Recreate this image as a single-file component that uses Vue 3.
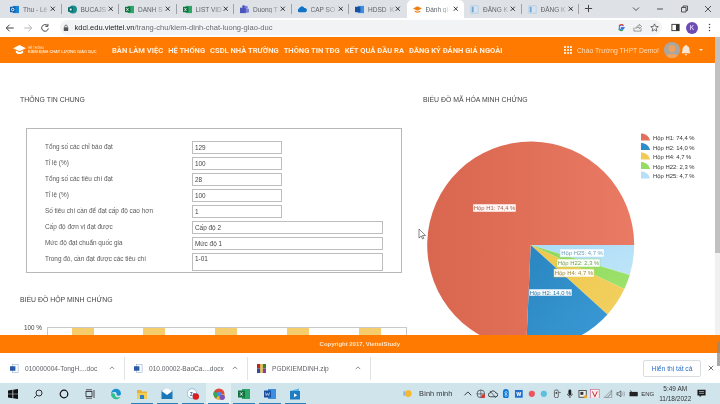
<script setup>
const tabs = [
  { t: 'Thu - Lê', i: 'outlook' }, { t: 'BUCAJS', i: 'sway' }, { t: 'DANH S', i: 'excel' },
  { t: 'LIST VID', i: 'excel' }, { t: 'Duong T', i: 'teams' }, { t: 'CAP SO', i: 'cloud' },
  { t: 'HDSD_K', i: 'word' }, { t: 'Đánh gi', i: 'cap', active: true },
  { t: 'ĐĂNG K', i: 'doc' }, { t: 'ĐĂNG K', i: 'doc' }
]
const nav = ['BÀN LÀM VIỆC', 'HỆ THỐNG', 'CSDL NHÀ TRƯỜNG', 'THÔNG TIN TĐG', 'KẾT QUẢ ĐẦU RA', 'ĐĂNG KÝ ĐÁNH GIÁ NGOÀI']
const fields = [
  { l: 'Tổng số các chỉ báo đạt', v: '129' }, { l: 'Tỉ lệ (%)', v: '100' },
  { l: 'Tổng số các tiêu chí đạt', v: '28' }, { l: 'Tỉ lệ (%)', v: '100' },
  { l: 'Số tiêu chí cần để đạt cấp độ cao hơn', v: '1' },
  { l: 'Cấp độ đơn vị đạt được', v: 'Cấp độ 2', wide: true },
  { l: 'Mức độ đạt chuẩn quốc gia', v: 'Mức độ 1', wide: true },
  { l: 'Trong đó, cần đạt được các tiêu chí', v: '1-01', area: true }
]
const cx = 530.7, cy = 245, r = 103.5
const pt = (d) => {
  const a = (d * Math.PI) / 180
  return `${(cx + r * Math.cos(a)).toFixed(2)} ${(cy + r * Math.sin(a)).toFixed(2)}`
}
const raw = [
  { n: 'Hộp H25: 4,7 %', p: 4.7, c: 'url(#gBlueL)', s: '#b5e0f7', tc: '#6f9fbb', box: [560, 249, 44, 8] },
  { n: 'Hộp H22: 2,3 %', p: 2.3, c: 'url(#gGreen)', s: '#94dc62', tc: '#76a056', box: [557, 259, 43, 8] },
  { n: 'Hộp H4: 4,7 %', p: 4.7, c: 'url(#gYellow)', s: '#efcb52', tc: '#a08a3a', box: [554, 269, 40, 8] },
  { n: 'Hộp H2: 14,0 %', p: 14, c: 'url(#gBlue)', s: '#2f8ec9', tc: '#2f7aa8', box: [529, 289, 43, 7] },
  { n: 'Hộp H1: 74,4 %', p: 74.3, c: 'url(#gRed)', s: '#e2705a', tc: '#a8604f', box: [473, 204, 43, 8] }
]
let acc = 0
const slices = raw.map((s) => {
  const a0 = acc
  acc += s.p * 3.6
  const large = s.p > 50 ? 1 : 0
  return { ...s, d: `M${cx} ${cy} L${pt(a0)} A${r} ${r} 0 ${large} 1 ${pt(acc)} Z` }
})
const legend = [
  { n: 'Hộp H1: 74,4 %', c: '#e2705a' }, { n: 'Hộp H2: 14,0 %', c: '#2f8ec9' },
  { n: 'Hộp H4: 4,7 %', c: '#efcb52' }, { n: 'Hộp H22: 2,3 %', c: '#94dc62' },
  { n: 'Hộp H25: 4,7 %', c: '#b5e0f7' }
]
const bars = [72, 143, 215, 287, 359]
const downloads = [
  { n: '010000004-TongH....doc', w: 124, k: 'w' },
  { n: '010.00002-BaoCa....docx', w: 123, k: 'w' },
  { n: 'PGDKIEMDINH.zip', w: 123, k: 'z' }
]
const grid = [0, 1, 2, 3, 4, 5, 6, 7, 8]
</script>

<template>
  <div class="screen">
    <div class="tabstrip">
      <div v-for="(tab, i) in tabs" :key="i" class="tab" :class="{ active: tab.active }">
        <svg class="tabicon" viewBox="0 0 10 10">
          <template v-if="tab.i === 'outlook'">
            <rect x="3" y="1" width="7" height="8" fill="#1a84d8" /><rect x="0" y="2" width="6" height="6" fill="#0f5ea8" /><circle cx="3" cy="5" r="1.4" fill="none" stroke="#fff" />
          </template>
          <template v-else-if="tab.i === 'sway'">
            <circle cx="5.5" cy="5" r="4.5" fill="#1c8d8d" /><rect x="0" y="2.5" width="5.5" height="5" fill="#0b6a6a" /><rect x="2" y="4" width="2" height="2" fill="#fff" />
          </template>
          <template v-else-if="tab.i === 'excel'">
            <rect x="3" y="1" width="7" height="8" fill="#2da768" /><rect x="0" y="2" width="6" height="6" fill="#107040" /><path d="M1.5 3.4l2.4 3.2M3.9 3.4L1.5 6.6" stroke="#fff" stroke-width=".8" />
          </template>
          <template v-else-if="tab.i === 'teams'">
            <circle cx="7" cy="2.5" r="1.6" fill="#7b83d8" /><rect x="5" y="4" width="5" height="4.5" rx="1" fill="#7b83d8" /><circle cx="4" cy="2" r="1.6" fill="#4b53bc" /><rect x="0" y="3" width="6.5" height="6" fill="#4b53bc" />
          </template>
          <template v-else-if="tab.i === 'cloud'">
            <path d="M1.5 8a2 2 0 0 1-.2-4A3 3 0 0 1 7 3.3 2.4 2.4 0 0 1 8 8z" fill="#0f74c8" />
          </template>
          <template v-else-if="tab.i === 'word'">
            <rect x="3" y="1" width="7" height="8" fill="#3d8de0" /><rect x="0" y="2" width="6" height="6" fill="#17509e" />
          </template>
          <template v-else-if="tab.i === 'cap'">
            <path d="M0 4l5-2.600L10 4 5 6.500z" fill="#f08012" /><path d="M2 6v1.500C3.500 9 6.500 9 8 7.500V6L5 7.500z" fill="#f08012" />
          </template>
          <template v-else>
            <rect x="1" y="1" width="8" height="8" fill="#d6e4f2" stroke="#9cc0de" stroke-width=".6" /><rect x="2" y="2" width="2" height="6" fill="#6fa4d4" />
          </template>
        </svg>
        <span class="tabtext">{{ tab.t }}</span>
        <svg class="tabx" viewBox="0 0 8 8"><path d="M1 1l6 6M7 1L1 7" stroke="#222" stroke-width="1.300" /></svg>
      </div>
      <svg class="plus" viewBox="0 0 10 10"><path d="M5 1v8M1 5h8" stroke="#444" stroke-width="1.100" /></svg>
      <div class="winctl">
        <svg viewBox="0 0 10 10"><path d="M2 3.500l3 3 3-3" fill="none" stroke="#444" stroke-width=".9" /></svg>
        <svg viewBox="0 0 10 10"><path d="M2 5h6" stroke="#444" stroke-width=".9" /></svg>
        <svg viewBox="0 0 10 10"><path d="M2.500 3.500h4.500v4.500h-4.500zM4 3.500V2h4.500v4.500H7" fill="none" stroke="#444" stroke-width=".9" /></svg>
        <svg viewBox="0 0 10 10"><path d="M2 2l6 6M8 2l-6 6" stroke="#444" stroke-width=".9" /></svg>
      </div>
    </div>

    <div class="addressbar">
      <svg class="navicon" viewBox="0 0 12 12"><path d="M10.500 6h-9M5.500 2L1.500 6l4 4" fill="none" stroke="#444" stroke-width="1.200" /></svg>
      <svg class="navicon" viewBox="0 0 12 12"><path d="M1.500 6h9M6.500 2l4 4-4 4" fill="none" stroke="#b4b6b9" stroke-width="1.200" /></svg>
      <svg class="navicon" viewBox="0 0 12 12"><path d="M10 6.500A4 4 0 1 1 8.800 3M9.500 1v3h-3" fill="none" stroke="#444" stroke-width="1.200" /></svg>
      <div class="omnibox">
        <svg class="lock" viewBox="0 0 8 10"><rect x="1" y="4" width="6" height="5" rx=".6" fill="#555" /><path d="M2.300 4V2.800a1.700 1.700 0 0 1 3.400 0V4" fill="none" stroke="#555" /></svg>
        <span class="url"><b>kdcl.edu.viettel.vn</b>/trang-chu/kiem-dinh-chat-luong-giao-duc</span>
        <div class="omniright">
          <svg viewBox="0 0 10 10"><path d="M8.600 5H5v1.200h2.300A2.600 2.600 0 1 1 7 3.100" fill="none" stroke="#3b78e7" stroke-width="1.200" /><path d="M2.200 3.200A3.400 3.400 0 0 1 7.300 2.800" fill="none" stroke="#e0483a" stroke-width="1.200" /><path d="M1.800 6.500A3.400 3.400 0 0 0 6.500 8" fill="none" stroke="#36a853" stroke-width="1.200" /></svg>
          <svg viewBox="0 0 10 10"><path d="M1 5v4h8V6M3 6c.4-2 2-3 4-3V1.500L9.500 4 7 6.400V5C5 5 4 5.200 3 6z" fill="none" stroke="#666" stroke-width=".7" /></svg>
          <svg viewBox="0 0 10 10"><path d="M5 1l1.200 2.800 3 .2-2.300 2 .7 3L5 7.500 2.400 9l.7-3L.8 4l3-.2z" fill="none" stroke="#444" stroke-width=".8" /></svg>
        </div>
      </div>
      <svg class="panel" viewBox="0 0 10 10"><rect x="1" y="1.500" width="8" height="7" fill="none" stroke="#333" stroke-width="1" /><rect x="5.500" y="1.500" width="3.500" height="7" fill="#333" /></svg>
      <span class="profile">K</span>
      <svg class="dots" viewBox="0 0 4 12"><circle cx="2" cy="2" r="1" fill="#444" /><circle cx="2" cy="6" r="1" fill="#444" /><circle cx="2" cy="10" r="1" fill="#444" /></svg>
    </div>

    <div class="viewport">
      <div class="page">
        <header class="topnav">
          <div class="logo">
            <svg viewBox="0 0 14 11"><path d="M0 3.500L7 0l7 3.500L7 7z" fill="#fff" /><path d="M3 6v2.500c2 2 6 2 8 0V6L7 8z" fill="#fff" /></svg>
            <div class="logotext"><small>HỆ THỐNG</small><span>KIỂM ĐỊNH CHẤT LƯỢNG GIÁO DỤC</span></div>
          </div>
          <nav class="menu"><a v-for="n in nav" :key="n">{{ n }}</a></nav>
          <div class="userarea">
            <div class="apps"><i v-for="g in grid" :key="g"></i></div>
            <span class="hello">Chào Trường THPT Demo!</span>
            <svg class="avatar" viewBox="0 0 16 16"><circle cx="8" cy="8" r="8" fill="#a9a7a3" /><circle cx="8" cy="6.500" r="3.500" fill="#f0a35e" /><path d="M2.500 14c1-3 10-3 11 0l-3 2h-5z" fill="#f0a35e" /></svg>
            <svg class="bell" viewBox="0 0 10 11"><path d="M5 0c.6 0 1 .4 1 1 2 .5 2.500 2 2.500 4 0 1.500.5 2.500 1.200 3.300H.3C1 7.500 1.500 6.500 1.500 5c0-2 .5-3.500 2.500-4 0-.6.4-1 1-1zM3.800 9.200h2.400A1.200 1.200 0 0 1 3.800 9.200z" fill="#f6e7d8" /></svg>
            <span class="caret"></span>
          </div>
        </header>

        <main class="content">
          <section class="left">
            <h2>THÔNG TIN CHUNG</h2>
            <div class="formbox">
              <div v-for="(f, i) in fields" :key="i" class="frow">
                <label>{{ f.l }}</label>
                <textarea v-if="f.area" class="wide area" readonly :value="f.v"></textarea>
                <input v-else :class="{ wide: f.wide }" readonly :value="f.v" />
              </div>
            </div>
            <h2 class="second">BIỂU ĐỒ HỘP MINH CHỨNG</h2>
            <div class="barchart">
              <span class="ytick">100 %</span>
              <div class="plot">
                <i v-for="b in bars" :key="b" class="bar" :style="{ left: b - 48 + 'px' }"></i>
              </div>
            </div>
          </section>
          <section class="right">
            <h2>BIỂU ĐỒ MÃ HÓA MINH CHỨNG</h2>
            <svg class="pie" viewBox="423 125 292 210" width="292" height="210">
              <defs>
                <linearGradient id="gRed" x1="0" y1="0" x2="1" y2="0"><stop offset="0" stop-color="#d9664f" /><stop offset="1" stop-color="#e97a63" /></linearGradient>
                <linearGradient id="gBlue" x1="0" y1="0" x2="1" y2="1"><stop offset="0" stop-color="#2a85c0" /><stop offset="1" stop-color="#3b9bd6" /></linearGradient>
                <linearGradient id="gYellow" x1="0" y1="0" x2="1" y2="1"><stop offset="0" stop-color="#eec84c" /><stop offset="1" stop-color="#f2d060" /></linearGradient>
                <linearGradient id="gGreen" x1="0" y1="0" x2="1" y2="1"><stop offset="0" stop-color="#8fd85c" /><stop offset="1" stop-color="#9ce26c" /></linearGradient>
                <linearGradient id="gBlueL" x1="0" y1="0" x2="1" y2="1"><stop offset="0" stop-color="#abdcf6" /><stop offset="1" stop-color="#bfe5f9" /></linearGradient>
              </defs>
              <path v-for="s in slices" :key="s.n" :d="s.d" :fill="s.c" />
              <g v-for="s in slices" :key="'l' + s.n">
                <rect :x="s.box[0]" :y="s.box[1]" :width="s.box[2]" :height="s.box[3]" fill="#fff" fill-opacity=".95" :stroke="s.s" stroke-width=".5" />
                <text :x="s.box[0] + s.box[2] / 2" :y="s.box[1] + 6" text-anchor="middle" class="slabel" :fill="s.tc">{{ s.n }}</text>
              </g>
              <g v-for="(l, i) in legend" :key="l.n">
                <path :d="`M641 ${133.500 + i * 9.500}c4 0 8 2.500 9 7h-9z`" :fill="l.c" />
                <text x="653" :y="140.300 + i * 9.500" class="llabel">{{ l.n }}</text>
              </g>
            </svg>
          </section>
          <svg class="cursor" viewBox="0 0 8 12"><path d="M1 1v9l2.200-2 1.300 3 1.300-.6-1.300-2.900h3z" fill="#fff" stroke="#555" stroke-width=".7" /></svg>
        </main>
      </div>
      <div class="scrolltrack"><div class="scrollthumb"></div></div>
    </div>

    <footer class="copyright">Copyright 2017, ViettelStudy</footer>

    <div class="shelf">
      <div v-for="d in downloads" :key="d.n" class="dl" :style="{ width: d.w + 'px' }">
        <svg class="dlicon" viewBox="0 0 10 10">
          <template v-if="d.k === 'w'"><rect x="3" y=".5" width="6" height="9" fill="#fff" stroke="#8aa6d2" stroke-width=".6" /><rect x="0" y="2.500" width="6" height="5" fill="#2a5aa8" /></template>
          <template v-else><rect x="0" y="0" width="5" height="5" fill="#b3282d" /><rect x="5" y="0" width="5" height="5" fill="#3e7d3a" /><rect x="0" y="5" width="5" height="5" fill="#314c9c" /><rect x="5" y="5" width="5" height="5" fill="#8a3f98" /><rect x="3.500" y="0" width="3" height="10" fill="#e6c65a" /></template>
        </svg>
        <span class="dlname">{{ d.n }}</span>
        <svg class="dlchev" viewBox="0 0 8 5"><path d="M1 4l3-3 3 3" fill="none" stroke="#555" stroke-width=".9" /></svg>
      </div>
      <button class="showall">Hiển thị tất cả</button>
      <svg class="shelfx" viewBox="0 0 8 8"><path d="M1 1l6 6M7 1L1 7" stroke="#444" stroke-width="1" /></svg>
    </div>

    <div class="taskbar">
      <div class="tasks">
        <div class="ti"><svg viewBox="0 0 10 10"><path d="M0 1.500l4.500-.7v3.900H0zM5.200.7L10 0v4.700H5.200zM0 5.300h4.500v3.900L0 8.500zM5.200 5.300H10V10l-4.800-.7z" fill="#111" /></svg></div>
        <div class="ti"><svg viewBox="0 0 10 10"><circle cx="6" cy="4" r="3" fill="none" stroke="#222" stroke-width=".9" /><path d="M3.800 6.200L1 9" stroke="#222" stroke-width=".9" /></svg></div>
        <div class="ti"><svg viewBox="0 0 10 10"><circle cx="5" cy="5" r="3.800" fill="none" stroke="#111" stroke-width="1.200" /></svg></div>
        <div class="ti"><svg viewBox="0 0 10 10"><rect x="1" y="2.500" width="6" height="5" fill="none" stroke="#222" stroke-width=".8" /><path d="M1 .8h6M1 9.200h6M9 1v8" stroke="#222" stroke-width=".8" /></svg></div>
        <div class="ti wide-gap"><svg viewBox="0 0 12 12"><path d="M1 6a5 5 0 0 1 10-.5c0 2-2 2.500-3.500 2-1-.4-1.200-1.500-.8-2C6 3.500 2.500 3.500 1 6z" fill="#1a8fcf" /><path d="M1 6c0 4 4 6 7 5 1.500-.5 2-1.200 2.500-2C8 10 4.500 9.500 5 6.500 4 4.500 1.500 5 1 6z" fill="#2fbf8f" /></svg></div>
        <div class="ti run"><svg viewBox="0 0 12 12"><path d="M1 2h4l1 1.500h5V6H1z" fill="#e8b23a" /><rect x="1" y="5" width="10" height="6" fill="#f4cd55" /><rect x="4" y="7" width="4" height="4" fill="#2a82c8" /></svg></div>
        <div class="ti run"><svg viewBox="0 0 12 12"><rect x="0.500" y="2.500" width="11" height="8.500" fill="#1a78b8" /><path d="M.5 3L6 .5 11.500 3 6 7z" fill="#fff" /></svg></div>
        <div class="ti run"><svg viewBox="0 0 12 12"><circle cx="5" cy="5.500" r="4.800" fill="#fff" stroke="#6aa6d8" stroke-width=".7" /><text x="3" y="7.500" class="tiny" fill="#2a6ab0">Zo</text><circle cx="8.800" cy="8.500" r="3.200" fill="#d92020" /></svg></div>
        <div class="ti run on"><svg viewBox="0 0 12 12"><circle cx="6" cy="6" r="5.500" fill="#e0483a" /><path d="M6 6L11.500 6A5.500 5.500 0 0 1 3 10.600z" fill="#f2c230" /><path d="M6 6L3 10.600A5.500 5.500 0 0 1 1.200 3.200z" fill="#36a853" /><circle cx="6" cy="6" r="2.300" fill="#4a8bf0" /><circle cx="9.200" cy="9.200" r="2.700" fill="#7b52b5" /></svg></div>
        <div class="ti run"><svg viewBox="0 0 12 12"><rect x="4" y="1" width="8" height="10" fill="#2da768" /><rect x="0" y="2.500" width="7" height="7" fill="#107040" /><path d="M2 4.300l2.800 3.400M4.800 4.300L2 7.700" stroke="#fff" stroke-width=".8" /></svg></div>
        <div class="ti run"><svg viewBox="0 0 12 12"><rect x="4" y="1" width="8" height="10" fill="#3d8de0" /><rect x="0" y="2.500" width="7" height="7" fill="#17509e" /><path d="M1.500 4.500l.8 3 1.200-2 1.200 2 .8-3" fill="none" stroke="#fff" stroke-width=".6" /></svg></div>
        <div class="ti run"><svg viewBox="0 0 12 12"><path d="M1 3l9-2.500V3z" fill="#5ab4e8" /><rect x="1" y="3" width="10" height="8.500" fill="#1f7dc4" /><path d="M5 5.200v4l3.200-2z" fill="#fff" /></svg></div>
      </div>
      <div class="weather">
        <svg viewBox="0 0 12 12"><circle cx="7" cy="6" r="4.500" fill="#f5b82e" /><path d="M1.500 3v6" stroke="#4a90d9" stroke-width="1.200" /></svg>
        <span>Bình minh</span>
      </div>
      <div class="tray">
        <svg viewBox="0 0 10 10"><path d="M1.500 6.500L5 3l3.500 3.500" fill="none" stroke="#222" stroke-width=".9" /></svg>
        <svg viewBox="0 0 10 10"><circle cx="5" cy="5" r="4" fill="none" stroke="#333" stroke-width=".7" /><path d="M1 5h8M5 1v8" stroke="#333" stroke-width=".6" /><circle cx="7.500" cy="7.500" r="2" fill="#d33" /></svg>
        <svg viewBox="0 0 10 10"><path d="M2.500 8a2 2 0 0 1-.2-4A3 3 0 0 1 8 4a2 2 0 0 1 0 4z" fill="none" stroke="#333" stroke-width=".9" /><path d="M2 2l6 7" stroke="#333" stroke-width=".7" /></svg>
        <svg viewBox="0 0 10 10"><rect x="2" y="0" width="6" height="10" rx="3" fill="#0a78d7" /><path d="M3.500 3.300l3 3.200-1.500 1.500v-6l1.500 1.500-3 3.200" fill="none" stroke="#fff" stroke-width=".5" /></svg>
        <svg viewBox="0 0 10 10"><rect x="1" y="1" width="8" height="8" fill="#1f6fd0" /><text x="2.200" y="7" class="tiny w" fill="#fff">W</text></svg>
        <svg viewBox="0 0 10 10"><circle cx="5" cy="5" r="3.200" fill="#ea5560" /></svg>
        <svg viewBox="0 0 10 10"><circle cx="5" cy="5" r="3.200" fill="#5cc0dc" /></svg>
        <svg viewBox="0 0 10 10"><rect x="2.500" y="1" width="4" height="8" rx="1.500" fill="none" stroke="#333" stroke-width=".7" /><circle cx="4.500" cy="4" r=".9" fill="#333" /><path d="M7 3.500h2" stroke="#333" stroke-width=".7" /></svg>
        <svg viewBox="0 0 10 10"><rect x="3.500" y="0.500" width="3" height="6" rx="1.500" fill="#222" /><path d="M2.500 5c0 3 5 3 5 0M5 8v2" fill="none" stroke="#222" stroke-width=".8" /></svg>
        <svg viewBox="0 0 10 10"><rect x="1" y="1.500" width="7.500" height="7" fill="#eee" stroke="#333" stroke-width=".8" /><rect x="2.500" y="3" width="3" height="3" fill="#333" /><circle cx="8" cy="8" r="1.800" fill="#efa52a" /></svg>
        <svg viewBox="0 0 10 10"><rect x=".5" y=".5" width="9" height="9" fill="#fbeeee" stroke="#c58" stroke-width=".6" /><path d="M2.500 2.500L5 8l2.500-5.500" fill="none" stroke="#c22" stroke-width="1" /></svg>
        <svg viewBox="0 0 10 10"><path d="M1 9L9 1v8z" fill="none" stroke="#777" stroke-width=".6" /><path d="M3 9l6-4M5 9l4-7" stroke="#777" stroke-width=".5" /></svg>
        <svg viewBox="0 0 10 10"><path d="M1 3.800h1.700L5 2v6L2.700 6.200H1z" fill="none" stroke="#333" stroke-width=".7" /><path d="M6.500 3.500a2 2 0 0 1 0 3M8 2.500a3.500 3.500 0 0 1 0 5" fill="none" stroke="#666" stroke-width=".5" /></svg>
        <svg viewBox="0 0 10 10"><rect x="0.500" y="3" width="8.500" height="4.500" fill="#222" /><path d="M1 1.500l2 1.500" stroke="#222" stroke-width=".7" /><rect x="9" y="4.300" width="1" height="2" fill="#222" /></svg>
      </div>
      <span class="eng">ENG</span>
      <div class="clock"><span>5:49 AM</span><span>11/18/2022</span></div>
      <svg class="notif" viewBox="0 0 10 10"><path d="M.5.800h9v6.500H5L3 9.200V7.300H.5z" fill="#1a1a1a" /><path d="M2.200 2.800h5.600M2.200 4.800h5.600" stroke="#d2e6ee" stroke-width=".7" /></svg>
    </div>
    <div class="shelfthumb"></div>
  </div>
</template>

<style>
html, body { margin: 0; padding: 0; background: #fff; overflow: hidden; }
</style>

<style scoped>
.screen { position: relative; width: 720px; height: 404px; overflow: hidden; display: flex; flex-direction: column; font-family: "Liberation Sans", Roboto, sans-serif; background: #fff; filter: blur(.3px); }

.tabstrip { height: 18px; flex: none; background: #dee1e6; display: flex; padding-left: 4px; box-sizing: border-box; }
.tab { width: 57.5px; height: 18px; flex: none; box-sizing: border-box; display: flex; align-items: center; padding: 0 5px 0 6px; position: relative; }
.tab::after { content: ""; position: absolute; right: 0; top: 4px; width: 1px; height: 10px; background: #9ea1a6; }
.tab:nth-child(7)::after, .tab.active::after { display: none; }
.tab.active { background: #fff; border-radius: 5px 5px 0 0; }
.tabicon { width: 9px; height: 9px; flex: none; }
.tabtext { font-size: 6.500px; color: #60646a; margin-left: 4px; white-space: nowrap; flex: none; -webkit-mask-image: linear-gradient(90deg, #000 60%, rgba(0,0,0,.35)); mask-image: linear-gradient(90deg, #000 60%, rgba(0,0,0,.35)); }
.tabx { width: 5.500px; height: 5.500px; margin-left: auto; margin-right: 1px; flex: none; }
.plus { width: 9px; height: 9px; margin: 4px 0 0 5px; flex: none; }
.winctl { margin-left: auto; display: flex; align-items: center; gap: 14px; padding: 0 7px 0 0; }
.winctl svg { width: 10px; height: 10px; }

.addressbar { height: 19px; flex: none; display: flex; align-items: center; padding-left: 5px; box-sizing: border-box; background: #fff; }
.navicon { width: 10px; height: 10px; margin-right: 7.500px; flex: none; }
.omnibox { width: 602px; height: 15px; margin-left: 2px; flex: none; background: #f1f3f4; border-radius: 8px; display: flex; align-items: center; padding-left: 3px; box-sizing: border-box; }
.lock { width: 6px; height: 8px; margin-right: 6px; flex: none; }
.url { font-size: 7.550px; color: #6a6d72; white-space: nowrap; }
.url b { font-weight: 400; color: #222; }
.omniright { margin-left: auto; display: flex; gap: 7.500px; padding-right: 3px; }
.omniright svg { width: 9px; height: 9px; }
.panel { width: 9px; height: 9px; margin-left: 9px; flex: none; }
.profile { width: 12px; height: 12px; border-radius: 50%; background: #6f4bb8; color: #fff; font-size: 6.500px; line-height: 12px; text-align: center; margin-left: 6.500px; flex: none; }
.dots { width: 3px; height: 9px; margin-left: 9.500px; flex: none; }

.viewport { height: 298px; flex: none; display: flex; }
.page { width: 715px; display: flex; flex-direction: column; flex: none; }
.scrolltrack { width: 5px; background: #f1f1f1; }
.scrollthumb { height: 216px; background: #c1c1c1; }

.topnav { height: 26px; flex: none; background: #ff7a00; display: flex; align-items: center; box-sizing: border-box; padding-left: 13px; color: #fdeedd; }
.logo { display: flex; align-items: center; gap: 2px; width: 99px; flex: none; }
.logo svg { width: 13px; height: 10px; flex: none; }
.logotext { display: flex; flex-direction: column; color: #fde4c9; line-height: 4px; }
.logotext small { font-size: 3px; }
.logotext span { font-size: 3.900px; white-space: nowrap; font-weight: 700; }
.menu { display: flex; gap: 5px; font-family: Roboto, "Liberation Sans", sans-serif; }
.menu a { font-size: 7.550px; font-weight: 700; white-space: nowrap; }
.userarea { margin-left: auto; display: flex; align-items: center; padding-right: 12px; }
.apps { display: grid; grid-template-columns: repeat(3, 2px); grid-auto-rows: 2px; gap: 1px; width: 8px; flex: none; }
.apps i { background: #fde7d0; display: block; }
.hello { font-size: 6.800px; margin-left: 5px; white-space: nowrap; color: #fbdcbc; }
.avatar { width: 16px; height: 16px; margin-left: 5px; }
.bell { width: 10px; height: 11px; margin-left: 1px; }
.caret { width: 0; height: 0; border: 2px solid transparent; border-top: 2.500px solid #fde7d0; border-bottom: 0; margin-left: 8px; }

.content { flex: 1; min-height: 0; overflow: hidden; display: flex; position: relative; background: #fff; }
h2 { margin: 0; font-size: 6.900px; font-weight: 400; color: #444; line-height: 12px; white-space: nowrap; }
.left { width: 423px; flex: none; padding: 31px 0 0 20px; box-sizing: border-box; }
.formbox { margin: 22px 0 0 6px; width: 376px; height: 145px; box-sizing: border-box; border: 1px solid #b8b8b8; padding: 12px 0 0 18px; display: flex; flex-direction: column; gap: 3px; }
.frow { display: flex; align-items: flex-start; }
.frow label { width: 147px; flex: none; font-size: 6.400px; color: #5a5a5a; line-height: 12px; white-space: nowrap; }
.frow input, .frow textarea { width: 90px; height: 13px; box-sizing: border-box; border: 1px solid #bdbdbd; padding: 0 2px; margin: 0; font: 6.400px "Liberation Sans", Roboto, sans-serif; color: #444; outline: none; background: #fff; display: block; border-radius: 0; }
.frow .wide { width: 191px; }
.frow .area { height: 18px; resize: none; overflow: hidden; line-height: 9px; }
.second { margin-top: 21px; }
.barchart { margin-top: 21px; display: flex; align-items: flex-start; margin-left: 4px; }
.ytick { font-size: 6.300px; color: #444; width: 23px; flex: none; line-height: 8px; margin-top: -3px; }
.plot { position: relative; width: 360px; height: 30px; border: solid #c9c9c9; border-width: 1px 1px 0; box-sizing: border-box; }
.bar { position: absolute; top: 0; width: 22px; height: 30px; background: #f5cd6c; }
.right { flex: 1; padding-top: 31px; }
.pie { display: block; margin-top: 19px; }
.slabel { font-size: 5.900px; font-family: "Liberation Sans", Roboto, sans-serif; }
.llabel { font-size: 5.900px; fill: #333; font-family: "Liberation Sans", Roboto, sans-serif; }
.cursor { position: absolute; left: 418px; top: 165px; width: 8px; height: 12px; }

.copyright { height: 18px; flex: none; background: #ff7a00; color: #fde4c9; font-size: 5.950px; font-weight: 700; display: flex; align-items: center; justify-content: flex-end; padding-right: 320px; box-sizing: border-box; }

.shelf { height: 30px; flex: none; background: #fff; display: flex; align-items: center; padding-left: 1px; box-sizing: border-box; }
.dl { height: 23px; display: flex; align-items: center; box-sizing: border-box; padding-left: 9px; border-right: 1px solid #e2e3e5; flex: none; }
.dlicon { width: 9px; height: 9px; flex: none; }
.dlname { font-size: 6.600px; color: #5f6368; margin-left: 6px; white-space: nowrap; flex: none; }
.dlchev { width: 6px; height: 4px; margin-left: auto; margin-right: 9px; flex: none; }
.showall { margin-left: auto; width: 58px; height: 17px; padding: 0; border: 1px solid #dadce0; border-radius: 2px; background: #fff; color: #2a6fc9; font: 6.700px "Liberation Sans", Roboto, sans-serif; white-space: nowrap; }
.shelfx { width: 6px; height: 6px; margin: 0 6px 0 7px; flex: none; }

.taskbar { flex: 1; min-height: 0; background: #d0e4ec; display: flex; align-items: center; }
.tasks { display: flex; align-items: center; width: 310px; flex: none; }
.ti { width: 25.600px; height: 21px; display: flex; align-items: center; justify-content: center; flex: none; box-sizing: border-box; }
.ti svg { width: 10px; height: 10px; }
.ti.wide-gap { margin-left: 1px; }
.ti.run { position: relative; }
.ti.run svg { width: 12px; height: 12px; }
.ti.wide-gap svg { width: 12px; height: 12px; }
.ti.run::after { content: ""; position: absolute; left: 2px; right: 2px; bottom: 0; height: 1px; background: #2a7fb8; }
.ti.on { background: #e2eff3; }
.tiny { font-size: 4.500px; font-weight: 700; font-family: Roboto, sans-serif; }
.tiny.w { font-size: 6px; }
.weather { display: flex; align-items: center; gap: 7.500px; font-size: 7.400px; color: #333; margin-left: 92.500px; white-space: nowrap; flex: none; }
.weather svg { width: 9px; height: 9px; flex: none; }
.tray { display: flex; align-items: center; gap: 3.070px; margin-left: 10.500px; flex: none; }
.tray svg { width: 9.700px; height: 9.700px; flex: none; }
.eng { font-size: 6px; color: #333; margin-left: 3px; flex: none; }
.clock { display: flex; flex-direction: column; align-items: center; font-size: 6.500px; color: #333; line-height: 10px; margin-left: 3px; width: 36px; flex: none; }
.notif { width: 9px; height: 9px; margin-left: 3.500px; flex: none; }
.shelfthumb { position: absolute; right: 0; top: 342px; width: 3px; height: 24px; background: #8f8a86; opacity: .75; }
</style>
